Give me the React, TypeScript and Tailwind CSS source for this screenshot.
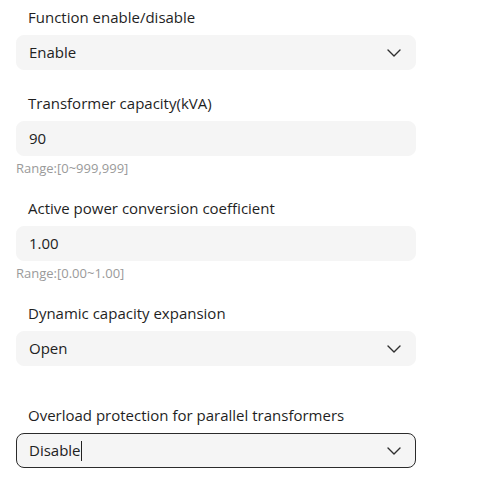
interface FieldProps {
  label: string;
  value: string;
  select?: boolean;
  focused?: boolean;
  help?: string;
  spaced?: boolean;
}

const Chevron = () => (
  <svg width="16" height="10" viewBox="0 0 16 10" fill="none" className="mr-[1px]">
    <path d="M2 2 L8 8 L14 2" stroke="#2f2f2f" strokeWidth="1.4" strokeLinecap="round" strokeLinejoin="round" />
  </svg>
);

const Field = ({ label, value, select, focused, help, spaced }: FieldProps) => (
  <div className={spaced ? "mb-8" : help ? "" : "mb-4"}>
    <div className="h-[35px] flex items-center pl-3 text-[15px] text-[#1f1f1f]">{label}</div>
    <div
      className={
        "h-[35px] w-[400px] rounded-lg bg-[#f5f5f5] flex items-center justify-between pl-3 pr-3 " +
        (focused ? "border border-[#2b2b2b]" : "border border-[#f5f5f5]")
      }
    >
      <span className="text-[15px] text-[#222] flex items-center">
        {value}
        {focused && <span className="inline-block w-px h-[20px] bg-[#222]" />}
      </span>
      {select && <Chevron />}
    </div>
    {help && (
      <div className="h-[35px] pt-[3px] text-[13px] leading-[18px] text-[#9a9a9a]">{help}</div>
    )}
  </div>
);

export default function App() {
  return (
    <div
      className="w-[490px] h-[489px] bg-white px-4 overflow-hidden"
      style={{ fontFamily: '"Open Sans", "Noto Sans", sans-serif' }}
    >
      <Field label="Function enable/disable" value="Enable" select />
      <Field label="Transformer capacity(kVA)" value="90" help="Range:[0~999,999]" />
      <Field label="Active power conversion coefficient" value="1.00" help="Range:[0.00~1.00]" />
      <Field label="Dynamic capacity expansion" value="Open" select spaced />
      <Field label="Overload protection for parallel transformers" value="Disable" select focused />
    </div>
  );
}
